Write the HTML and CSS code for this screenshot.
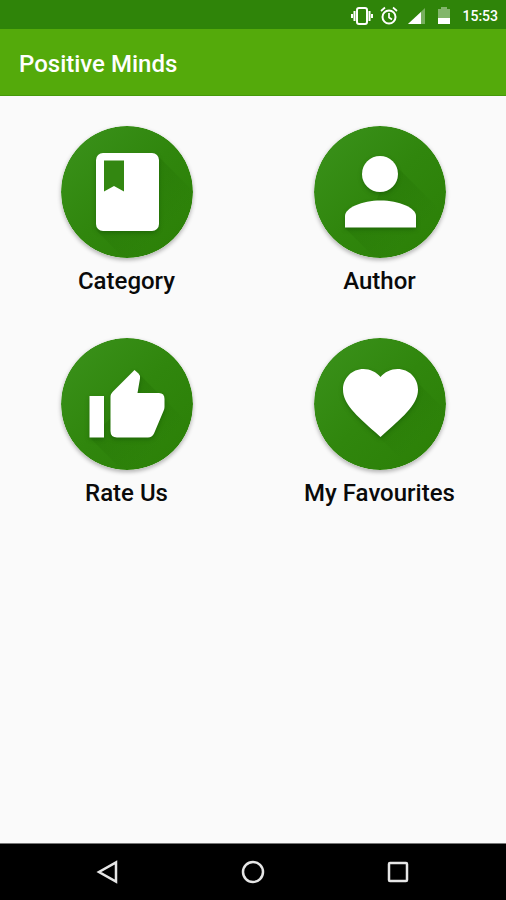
FILE: index.html
```html
<!DOCTYPE html>
<html lang="en">
<head>
    <meta charset="UTF-8">
    <meta name="viewport" content="width=device-width, initial-scale=1.0">
    <title>Positive Minds</title>
    <link rel="stylesheet" href="styles.css">
</head>
<body>
    <div class="status-bar">
        <svg class="status-icon vibrate" viewBox="0 0 22 20" aria-hidden="true">
            <rect x="6" y="2" width="10" height="16" rx="2" fill="none" stroke="#fff" stroke-width="2"/>
            <path d="M3.500 5v10M18.500 5v10M1 8v4M21 8v4" stroke="#fff" stroke-width="2"/>
        </svg>
        <svg class="status-icon alarm" viewBox="0 0 18 20" aria-hidden="true">
            <circle cx="9" cy="11" r="6.500" fill="none" stroke="#fff" stroke-width="2"/>
            <path d="M9 7v4.500l3 2M1 5l4-3.500M17 5l-4-3.500" fill="none" stroke="#fff" stroke-width="1.700"/>
        </svg>
        <svg class="status-icon signal" viewBox="0 0 17 20" aria-hidden="true">
            <path d="M17 2v16H0z" fill="#fff" opacity=".35"/>
            <path d="M13 6V18H0z" fill="#fff"/>
        </svg>
        <svg class="status-icon battery" viewBox="0 0 12 20" aria-hidden="true">
            <path d="M0 3h3V1h6v2h3v9H0z" fill="#fff" opacity=".4"/>
            <path d="M0 12h12v6H0z" fill="#fff"/>
        </svg>
        <span class="clock">15:53</span>
    </div>

    <header class="app-bar">
        <h1>Positive Minds</h1>
    </header>

    <main class="menu">
        <button class="menu-item" type="button">
            <svg class="menu-icon" viewBox="0 0 132 132" aria-hidden="true">
                <defs>
                    <linearGradient id="disc" x1="0" y1="0" x2="1" y2="1">
                        <stop offset="0" stop-color="#3b921c"/>
                        <stop offset=".5" stop-color="#30860d"/>
                        <stop offset="1" stop-color="#2b7f06"/>
                    </linearGradient>
                    <linearGradient id="cast" gradientUnits="userSpaceOnUse" x1="50" y1="50" x2="104" y2="104">
                        <stop offset="0" stop-color="#1c6500" stop-opacity=".35"/>
                        <stop offset="1" stop-color="#1c6500" stop-opacity="0"/>
                    </linearGradient>
                    <clipPath id="round"><circle cx="66" cy="66" r="66"/></clipPath>
                </defs>
                <circle cx="66" cy="66" r="66" fill="url(#disc)"/>
                <path d="M96 29l60 60v67h-70l-50-51z" fill="url(#cast)" clip-path="url(#round)"/>
                <rect class="glyph" x="35" y="27" width="63" height="78" rx="7"/>
                <path d="M43 34.500h20V65.500l-10-5.500-10 5.500z" fill="#338711"/>
            </svg>
            <span>Category</span>
        </button>
        <button class="menu-item" type="button">
            <svg class="menu-icon" viewBox="0 0 132 132" aria-hidden="true">
                <circle cx="66" cy="66" r="66" fill="url(#disc)"/>
                <path d="M79 37l77 77v42H85l-54-54 30-25z" fill="url(#cast)" clip-path="url(#round)"/>
                <g class="glyph">
                    <circle cx="66" cy="48" r="18"/>
                    <path d="M31 101.500V90c0-8 17-15.500 35.500-15.500S102 82 102 90v11.500z"/>
                </g>
            </svg>
            <span>Author</span>
        </button>
        <button class="menu-item" type="button">
            <svg class="menu-icon" viewBox="0 0 132 132" aria-hidden="true">
                <circle cx="66" cy="66" r="66" fill="url(#disc)"/>
                <path d="M79 37l77 77v42H85l-56-56 46-44z" fill="url(#cast)" clip-path="url(#round)"/>
                <g class="glyph">
                    <path d="M28.500 58H43v41.500H28.500z"/>
                    <path d="M49.500 59c0-2.500 1-4 2.500-5.500L73.500 32l4 3.500q2 2 1.500 5L76.500 55H98q5.500 0 5.500 6v8q0 2-1 4L93 95.500q-2 4-6 4H56q-6.500 0-6.500-6.500z"/>
                </g>
            </svg>
            <span>Rate Us</span>
        </button>
        <button class="menu-item" type="button">
            <svg class="menu-icon" viewBox="0 0 132 132" aria-hidden="true">
                <circle cx="66" cy="66" r="66" fill="url(#disc)"/>
                <path d="M97 38l59 59v59h-34L40 74z" fill="url(#cast)" clip-path="url(#round)"/>
                <path class="glyph" d="M66.500 99l-5.500-5C42 77 29 66 29 51.500 29 40 38 31 49.500 31c6.500 0 13 3 17 8 4-5 10.500-8 17-8C95 31 104 40 104 51.500 104 66 91 77 72 94z"/>
            </svg>
            <span>My Favourites</span>
        </button>
    </main>

    <nav class="nav-bar">
        <button type="button" aria-label="Back">
            <svg viewBox="0 0 24 24" stroke-width="2.500"><path d="M20 2.500v19L3 12z"/></svg>
        </button>
        <button type="button" aria-label="Home">
            <svg viewBox="0 0 24 24" stroke-width="2.500"><circle cx="12" cy="12" r="10"/></svg>
        </button>
        <button type="button" aria-label="Recent apps">
            <svg viewBox="0 0 24 24" stroke-width="2.500"><rect x="3" y="3" width="18" height="18" rx="1"/></svg>
        </button>
    </nav>
</body>
</html>
```

FILE: styles.css
```css
* {
    box-sizing: border-box;
}
body {
    display: flex;
    flex-direction: column;
    min-height: 100vh;
    margin: 0;
    background-color: #fafafa;
    color: #0a0a0a;
    font-family: Roboto, "Liberation Sans", sans-serif;
}
button {
    padding: 0;
    border: none;
    background: none;
    color: inherit;
    font: inherit;
    cursor: pointer;
}
.status-bar {
    display: flex;
    align-items: center;
    justify-content: flex-end;
    height: 29px;
    padding: 2px 8px 0;
    background-color: #2f8409;
    color: #fff;
}
.status-icon {
    height: 20px;
}
.vibrate {
    width: 22px;
    margin-right: 7px;
}
.alarm {
    width: 18px;
    margin-right: 10px;
}
.signal {
    width: 17px;
    margin-right: 13px;
}
.battery {
    width: 12px;
    margin-right: 12px;
}
.clock {
    font-size: 14px;
    font-weight: 500;
    line-height: 20px;
}
.app-bar {
    display: flex;
    align-items: center;
    height: 67px;
    padding: 4px 19px 0;
    border-bottom: 1px solid #46990a;
    background-color: #54aa0b;
    color: #fff;
}
h1 {
    margin: 0;
    font-size: 24px;
    font-weight: 500;
    line-height: 28px;
}
.menu {
    display: grid;
    flex: 1;
    grid-template-columns: 1fr 1fr;
    align-content: start;
    row-gap: 42px;
    padding-top: 30px;
}
.menu-item {
    display: flex;
    flex-direction: column;
    align-items: center;
    gap: 8px;
    font-size: 24px;
    font-weight: 500;
    line-height: 30px;
}
.menu-icon {
    width: 132px;
    height: 132px;
    border-radius: 50%;
    box-shadow: 0 2px 4px rgba(0, 0, 0, 0.3);
}
.glyph {
    fill: #fff;
    filter: drop-shadow(0 2px 2px rgba(0, 50, 0, 0.3));
}
.nav-bar {
    display: flex;
    align-items: center;
    justify-content: space-between;
    height: 57px;
    padding: 0 19%;
    border-top: 1px solid #777;
    background-color: #000;
}
.nav-bar svg {
    display: block;
    width: 24px;
    height: 24px;
    fill: none;
    stroke: #e6e6e6;
}
```
